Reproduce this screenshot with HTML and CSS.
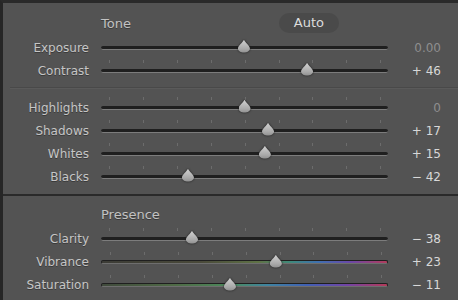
FILE: index.html
```html
<!DOCTYPE html>
<html lang="en">
    <head>
        <meta charset="UTF-8" />
        <title>Basic</title>
        <link rel="stylesheet" href="styles.css">
    </head>
    <body>
        <div class="panel">
            <div class="group first">
                <div class="heading">
                    <span class="title">Tone</span>
                    <span class="auto">Auto</span>
                </div>
                <div class="row">
                    <span class="label">Exposure</span>
                    <div class="track plain"><span class="thumb" style="left: 49.8%"></span></div>
                    <span class="value dim">0.00</span>
                </div>
                <div class="row">
                    <span class="label">Contrast</span>
                    <div class="track"><span class="thumb" style="left: 71.8%"></span></div>
                    <span class="value">+ 46</span>
                </div>
            </div>

            <div class="group second">
                <div class="row">
                    <span class="label">Highlights</span>
                    <div class="track"><span class="thumb" style="left: 50%"></span></div>
                    <span class="value dim">0</span>
                </div>
                <div class="row">
                    <span class="label">Shadows</span>
                    <div class="track"><span class="thumb" style="left: 58.2%"></span></div>
                    <span class="value">+ 17</span>
                </div>
                <div class="row">
                    <span class="label">Whites</span>
                    <div class="track"><span class="thumb" style="left: 57.1%"></span></div>
                    <span class="value">+ 15</span>
                </div>
                <div class="row">
                    <span class="label">Blacks</span>
                    <div class="track"><span class="thumb" style="left: 30.3%"></span></div>
                    <span class="value">&minus; 42</span>
                </div>
            </div>

            <div class="group third">
                <div class="heading">
                    <span class="title">Presence</span>
                </div>
                <div class="row">
                    <span class="label">Clarity</span>
                    <div class="track"><span class="thumb" style="left: 31.7%"></span></div>
                    <span class="value">&minus; 38</span>
                </div>
                <div class="row">
                    <span class="label">Vibrance</span>
                    <div class="track color vib"><span class="thumb" style="left: 61%"></span></div>
                    <span class="value">+ 23</span>
                </div>
                <div class="row">
                    <span class="label">Saturation</span>
                    <div class="track color sat"><span class="thumb" style="left: 44.9%"></span></div>
                    <span class="value">&minus; 11</span>
                </div>
            </div>
        </div>
    </body>
</html>
```

FILE: styles.css
```css
html,
body {
    margin: 0;
    height: 100%;
    background-color: #535353;
}
body {
    font-family: "DejaVu Sans", "Liberation Sans", sans-serif;
    font-size: 12px;
    color: #c6c6c6;
    overflow: hidden;
}
.panel {
    height: 100%;
    border-left: 3px solid #262626;
    border-top: 3px solid #2a2a2a;
    box-sizing: border-box;
}
.group.first {
    padding: 7px 0 6px;
    position: relative;
}
.group.first::after {
    content: "";
    position: absolute;
    left: 7px;
    right: 0;
    bottom: 0;
    height: 1px;
    background-color: #494949;
    box-shadow: 0 1px 0 #5a5a5a;
}
.group.second {
    padding: 8px 0 6px;
    border-bottom: 2px solid #2a2a2a;
}
.group.third {
    padding-top: 5px;
}
.heading {
    display: flex;
    align-items: center;
    height: 26px;
    padding-left: 98px;
}
.title {
    font-size: 13px;
    color: #c2c2c2;
    text-shadow: 0 1px 0 #3a3a3a;
}
.auto {
    margin-left: 148px;
    width: 60px;
    height: 20px;
    line-height: 20px;
    text-align: center;
    border-radius: 10px;
    background-color: #4a4a4a;
    color: #dcdcdc;
    font-size: 13px;
}
.row {
    display: grid;
    grid-template-columns: 86px 287px 41px;
    column-gap: 12px;
    align-items: center;
    height: 23px;
}
.label {
    text-align: right;
    text-shadow: 0 1px 0 #3a3a3a;
}
.value {
    text-align: right;
    color: #d8d8d8;
}
.value.dim {
    color: #8e8e8e;
}
.track {
    position: relative;
    height: 3px;
    background-color: #1f1f1f;
    border-bottom: 1px solid #7c7c7c;
    border-radius: 3px;
}
.track::before {
    content: "";
    position: absolute;
    left: 8px;
    width: 273px;
    top: -9px;
    height: 3px;
    background: repeating-linear-gradient(to right, #6c6c6c 0 1px, transparent 1px 33.9px);
}
.track.plain::before {
    display: none;
}
.track.color {
    border: 1px solid #1f1f1f;
    border-bottom-color: #6e6e6e;
    height: 2px;
}
.track.vib {
    background: linear-gradient(to right, #3c3c36 0%, #4a4a3a 35%, #5f7346 55%, #3f8a7a 66%, #3f70b0 76%, #6a48a8 87%, #b23c5c 100%);
}
.track.sat {
    background: linear-gradient(to right, #404a3c 0%, #4f6a46 25%, #4c8a5c 45%, #3f84a0 58%, #4060b4 72%, #7244a6 86%, #b43a58 100%);
}
.thumb {
    position: absolute;
    top: -6px;
    width: 12px;
    height: 13px;
    margin-left: -6px;
    filter: drop-shadow(0 0 1px #1c1c1c);
}
.thumb::before {
    content: "";
    position: absolute;
    inset: 0;
    background: linear-gradient(#d0d0d0, #a8a8a8 70%, #8e8e8e);
    clip-path: path("M6 0 C7 3 12 6 12 9 C12 11.5 9 13 6 13 C3 13 0 11.5 0 9 C0 6 5 3 6 0Z");
}
```
